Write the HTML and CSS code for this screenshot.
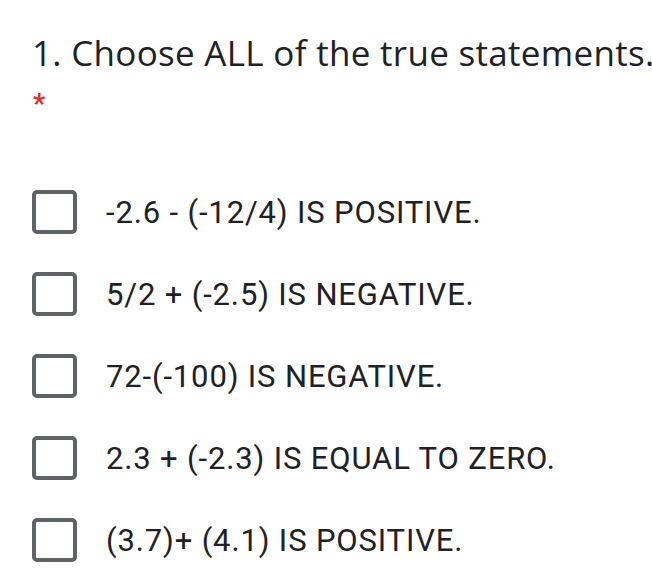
FILE: index.html
```html
<!DOCTYPE html>
<html>
<head>
<meta charset="utf-8">
<link rel="stylesheet" href="styles.css">
</head>
<body>
<div class="question">
  <div class="title">1. Choose ALL of the true statements.</div>
  <div class="required">*</div>
  <div class="options">
    <label class="option"><span class="box"></span><span class="label">-2.6 - (-12/4) IS POSITIVE.</span></label>
    <label class="option"><span class="box"></span><span class="label">5/2 + (-2.5) IS NEGATIVE.</span></label>
    <label class="option"><span class="box"></span><span class="label">72-(-100) IS NEGATIVE.</span></label>
    <label class="option"><span class="box"></span><span class="label">2.3 + (-2.3) IS EQUAL TO ZERO.</span></label>
    <label class="option"><span class="box"></span><span class="label">(3.7)+ (4.1) IS POSITIVE.</span></label>
  </div>
</div>
</body>
</html>
```
FILE: styles.css
```css
html, body {
  margin: 0;
  padding: 0;
  background: #ffffff;
  overflow: hidden;
}
.question {
  padding: 31px 0 0 32px;
}
.title {
  font-family: "Open Sans", sans-serif;
  font-size: 35px;
  line-height: 44px;
  letter-spacing: 0.3px;
  color: #202124;
  white-space: nowrap;
  overflow: hidden;
}
.required {
  font-family: "Roboto", sans-serif;
  font-weight: 700;
  color: #d93025;
  font-size: 27px;
  line-height: 30px;
  height: 30px;
  margin-top: 14px;
  padding-left: 1px;
}
.options {
  display: flex;
  flex-direction: column;
  gap: 38px;
  margin-top: 71px;
}
.option {
  display: flex;
  align-items: center;
  height: 44px;
}
.box {
  box-sizing: border-box;
  width: 45px;
  height: 44px;
  border: 4px solid #5f6368;
  border-radius: 5px;
  flex: none;
}
.label {
  font-family: "Roboto", sans-serif;
  font-size: 31px;
  letter-spacing: 0.85px;
  color: #202124;
  margin-left: 29px;
  white-space: nowrap;
}
```
